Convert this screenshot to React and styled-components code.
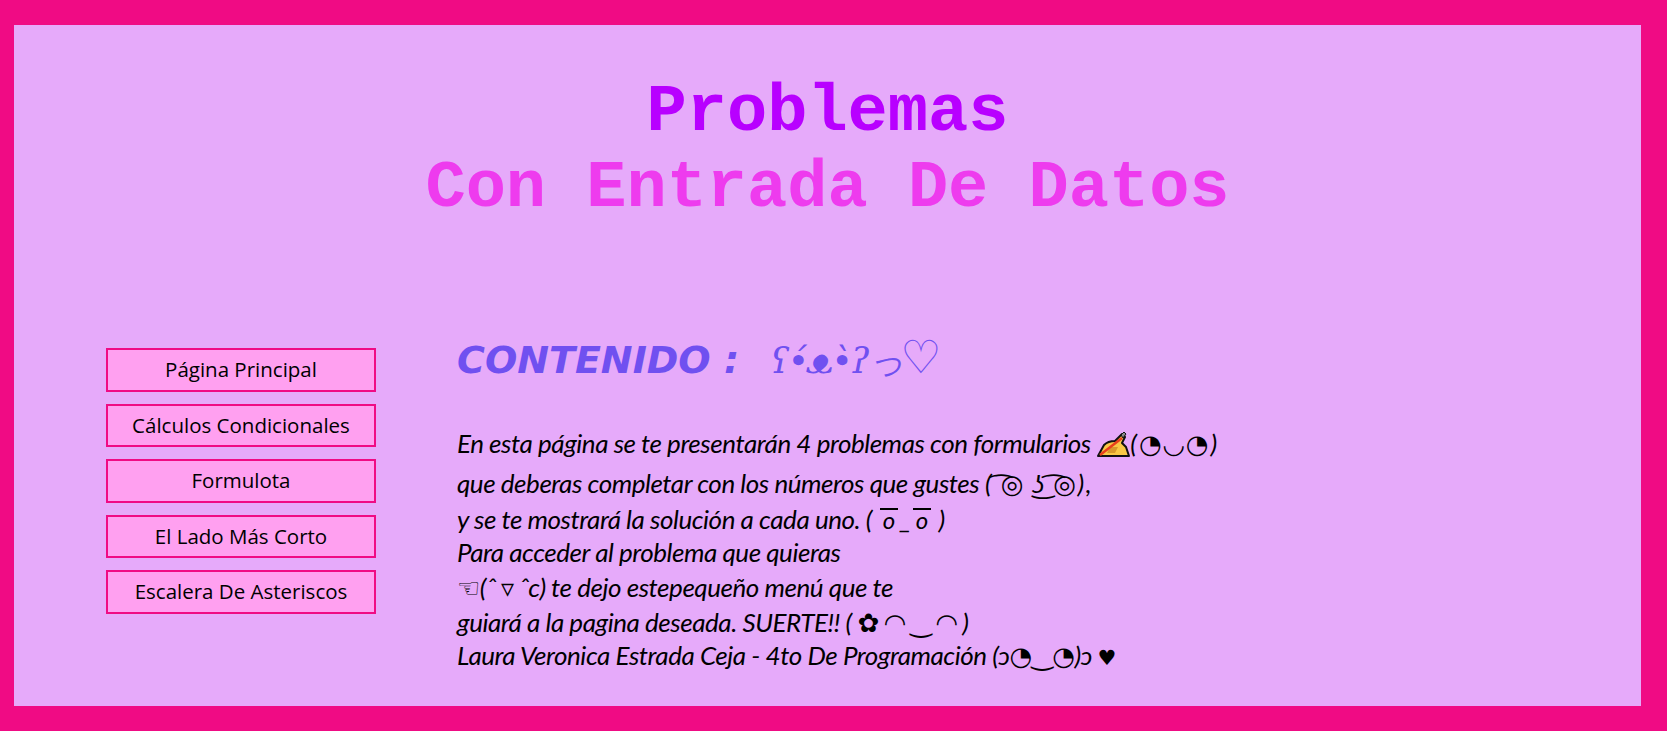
import styled, { createGlobalStyle } from "styled-components";

const GlobalStyle = createGlobalStyle`
  html, body {
    margin: 0;
    padding: 0;
    background-color: #f00b84;
  }
`;

const Frame = styled.div`
  box-sizing: border-box;
  width: 1667px;
  height: 731px;
  padding: 25px 26px 25px 14px;
  background-color: #f00b84;
`;

const Panel = styled.main`
  height: 100%;
  background-color: #e6aafa;
  display: flex;
  flex-direction: column;
`;

const Header = styled.header`
  padding-top: 49px;
  text-align: center;
  font-family: "Liberation Mono", monospace;
  font-weight: 700;
  font-size: 67px;
  line-height: 76px;
`;

const Title = styled.h1`
  margin: 0;
  font: inherit;
  color: ${(props) => props.color};
`;

const Body = styled.div`
  display: flex;
  margin-top: 116px;
  padding-left: 92px;
`;

const Menu = styled.nav`
  width: 270px;
  margin-top: 6px;
  display: flex;
  flex-direction: column;
  gap: 12px;
`;

const MenuItem = styled.a`
  box-sizing: border-box;
  height: 43.6px;
  border: 2px solid #f00b84;
  background-color: #ffa0f0;
  color: #000;
  font-family: "Open Sans", sans-serif;
  font-size: 20.5px;
  line-height: 38px;
  text-align: center;
`;

const Content = styled.section`
  margin-left: 81px;
`;

const Heading = styled.h2`
  margin: -6px 0 39px;
  color: #7050f0;
  font-family: "DejaVu Sans", sans-serif;
  font-style: italic;
  font-weight: 700;
  font-size: 38px;
  line-height: 48px;
  white-space: nowrap;
`;

const Bear = styled.span`
  margin-left: 18px;
  font-weight: 400;
  font-family: "DejaVu Serif", serif;
  font-size: 36px;
  letter-spacing: -2px;
`;

const BigHeart = styled.span`
  margin-left: -3px;
  font-size: 46px;
  line-height: 0;
`;

const Line = styled.p`
  margin: 0;
  height: ${(props) => props.$h}px;
  line-height: ${(props) => props.$h}px;
  color: #000;
  font-family: "Lato", "DejaVu Sans", sans-serif;
  font-style: italic;
  font-size: 26px;
  letter-spacing: -0.45px;
  white-space: nowrap;
`;

const Kaomoji = styled.span`
  letter-spacing: ${(props) => props.$spacing}px;
`;

const Barred = styled.span`
  display: inline-block;
  width: 18px;
  margin: 0 2px;
  border-top: 2px solid #000;
  font-size: 24px;
  line-height: 20px;
  text-align: center;
`;

const SmallHeart = styled.span`
  font-size: 21px;
`;

const Writing = () => (
  <svg width="34" height="28" viewBox="0 0 34 28" style={{ verticalAlign: "-5px" }}>
    <path d="M2 26 L8 15 Q12 11 19 11 L26 4 L29 7 L26 13 L30 17 L33 26 Z" fill="#f9c846" stroke="#111" strokeWidth="2" strokeLinejoin="round" />
    <path d="M14 17 L22 17 L19 23 L11 23 Z" fill="#d99a2c" />
    <path d="M4 25 L26 8" stroke="#e8401c" strokeWidth="2.5" />
    <path d="M25 5 L28 2 L30 4 L27 8 Z" fill="#888" stroke="#111" strokeWidth="1" />
  </svg>
);

export default function App() {
  return (
    <>
      <GlobalStyle />
      <Frame>
        <Panel>
          <Header>
            <Title color="#b800ff">Problemas</Title>
            <Title color="#ee3bee">Con Entrada De Datos</Title>
          </Header>
          <Body>
            <Menu>
              <MenuItem>Página Principal</MenuItem>
              <MenuItem>Cálculos Condicionales</MenuItem>
              <MenuItem>Formulota</MenuItem>
              <MenuItem>El Lado Más Corto</MenuItem>
              <MenuItem>Escalera De Asteriscos</MenuItem>
            </Menu>
            <Content>
              <Heading>
                CONTENIDO : <Bear>ʕ•́ᴥ•̀ʔっ<BigHeart>♡</BigHeart></Bear>
              </Heading>
              <Line $h={39}>
                En esta página se te presentarán 4 problemas con formularios <Writing /><Kaomoji $spacing={2}>(◔◡◔)</Kaomoji>
              </Line>
              <Line $h={40}>que deberas completar con los números que gustes <Kaomoji $spacing={1.5}>( ͡◎ ͜ʖ ͡◎),</Kaomoji></Line>
              <Line $h={33}>y se te mostrará la solución a cada uno. ( <Barred>o</Barred>_<Barred>o</Barred> )</Line>
              <Line $h={33}>Para acceder al problema que quieras</Line>
              <Line $h={36}>☜(ˆ ▿ ˆc) te dejo estepequeño menú que te</Line>
              <Line $h={34}>guiará a la pagina deseada. SUERTE!! <Kaomoji $spacing={5.5}>(✿◠‿◠)</Kaomoji></Line>
              <Line $h={33}>Laura Veronica Estrada Ceja - 4to De Programación (ɔ◔‿◔)ɔ <SmallHeart>♥</SmallHeart></Line>
            </Content>
          </Body>
        </Panel>
      </Frame>
    </>
  );
}
